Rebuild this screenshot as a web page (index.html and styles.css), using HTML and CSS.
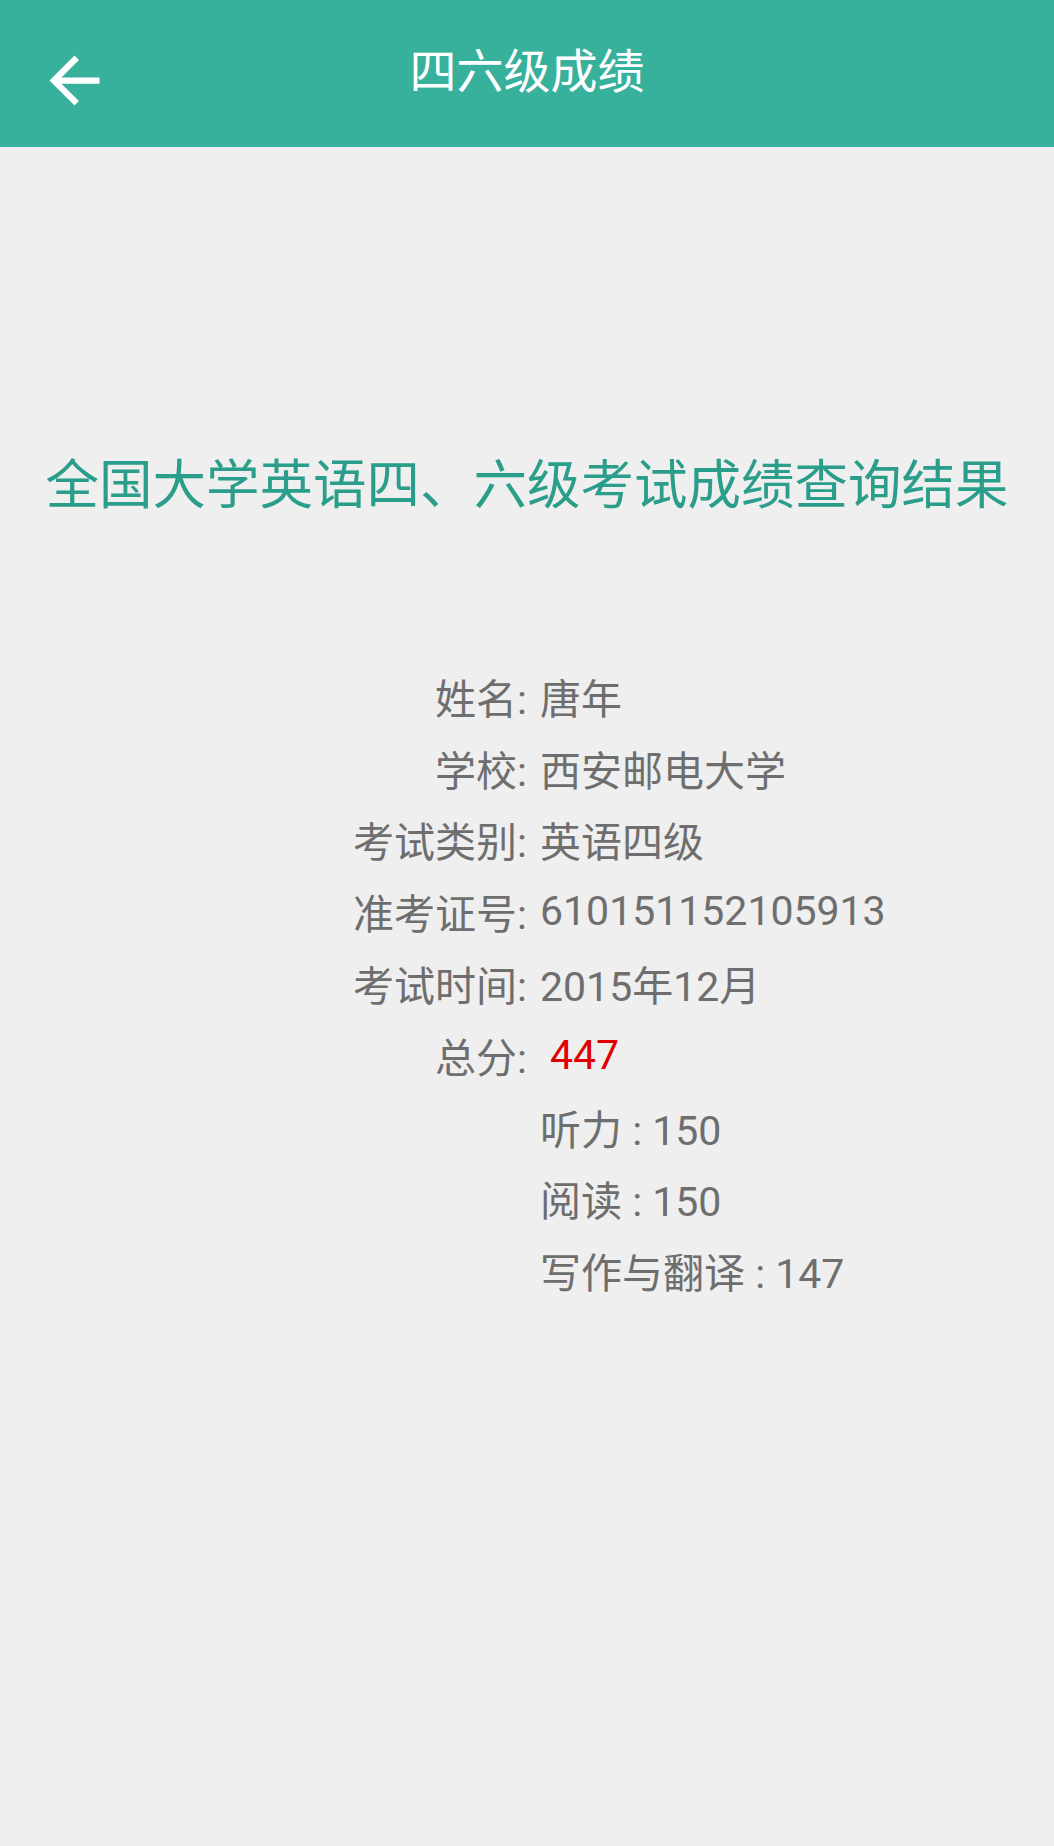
FILE: index.html
```html
<!DOCTYPE html>
<html lang="zh-CN">
<head>
<meta charset="utf-8">
<title>四六级成绩</title>
<link rel="stylesheet" href="styles.css">
</head>
<body>
<header class="toolbar">
  <div class="toolbar-left">
    <svg class="back-icon" viewBox="0 0 24 24" width="75" height="75" aria-hidden="true">
      <path d="M20 11H7.83l5.59-5.59L12 4l-8 8 8 8 1.41-1.41L7.83 13H20v-2z" fill="#ffffff"/>
    </svg>
  </div>
  <h1 class="toolbar-title">四六级成绩</h1>
  <div class="toolbar-right"></div>
</header>
<main class="content">
  <h2 class="result-heading">全国大学英语四、六级考试成绩查询结果</h2>
  <div class="info">
    <div class="label">姓名:</div><div class="value">唐年</div>
    <div class="label">学校:</div><div class="value">西安邮电大学</div>
    <div class="label">考试类别:</div><div class="value">英语四级</div>
    <div class="label">准考证号:</div><div class="value">610151152105913</div>
    <div class="label">考试时间:</div><div class="value">2015年12月</div>
    <div class="label">总分:</div><div class="value score">447</div>
    <div class="sub">听力 : 150</div>
    <div class="sub">阅读 : 150</div>
    <div class="sub">写作与翻译 : 147</div>
  </div>
</main>
</body>
</html>
```
FILE: styles.css
```css
html, body {
  margin: 0;
  padding: 0;
}
body {
  width: 1054px;
  min-height: 1846px;
  background: #efefef;
  font-family: Roboto, "Noto Sans CJK SC", sans-serif;
}
.toolbar {
  height: 147px;
  background: #37b09c;
  display: grid;
  grid-template-columns: 1fr auto 1fr;
  align-items: center;
}
.toolbar-left {
  display: flex;
  align-items: center;
}
.back-icon {
  display: block;
  margin-left: 37px;
  margin-top: 14px;
}
.toolbar-title {
  margin: 0;
  color: #ffffff;
  font-size: 47px;
  font-weight: 400;
  line-height: 56px;
  margin-top: -4px;
}
.content {
  padding-top: 307px;
}
.result-heading {
  margin: 0;
  text-align: center;
  color: #2a9e8a;
  font-size: 53.5px;
  font-weight: 400;
  line-height: 64px;
}
.info {
  margin-top: 142px;
  display: grid;
  grid-template-columns: 527px auto;
  grid-auto-rows: 71.8px;
  align-items: center;
  color: #6e6e6e;
  font-size: 41px;
}
.label {
  justify-self: end;
}
.value {
  padding-left: 13px;
}
.score {
  color: #e00000;
  padding-left: 23px;
}
.sub {
  grid-column: 2;
  padding-left: 13px;
}
```
